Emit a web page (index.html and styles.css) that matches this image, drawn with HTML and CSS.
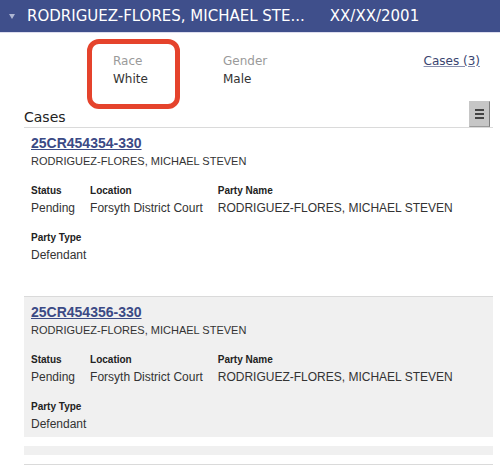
FILE: index.html
```html
<!DOCTYPE html>
<html>
<head>
<meta charset="utf-8">
<link rel="stylesheet" href="styles.css">
</head>
<body>
<div class="header">
  <span class="caret"></span>
  <span class="hname">RODRIGUEZ-FLORES, MICHAEL STE...</span>
  <span class="hdate">XX/XX/2001</span>
</div>
<div class="main">
  <div class="info">
    <div class="field race">
      <div class="flabel">Race</div>
      <div class="fvalue">White</div>
    </div>
    <div class="field">
      <div class="flabel">Gender</div>
      <div class="fvalue">Male</div>
    </div>
    <a class="caselink" href="#">Cases (3)</a>
    <div class="highlight"></div>
  </div>
  <div class="cases-head">
    <span class="cases-title">Cases</span>
    <button class="menu-btn" aria-label="menu"><span></span><span></span><span></span></button>
  </div>
  <div class="list">
    <div class="case">
      <a class="case-no" href="#">25CR454354-330</a>
      <div class="case-name">RODRIGUEZ-FLORES, MICHAEL STEVEN</div>
      <div class="cols">
        <div><div class="lbl">Status</div><div class="val">Pending</div></div>
        <div><div class="lbl">Location</div><div class="val">Forsyth District Court</div></div>
        <div><div class="lbl">Party Name</div><div class="val">RODRIGUEZ-FLORES, MICHAEL STEVEN</div></div>
      </div>
      <div class="cols second">
        <div><div class="lbl">Party Type</div><div class="val">Defendant</div></div>
      </div>
    </div>
    <div class="case alt">
      <a class="case-no" href="#">25CR454356-330</a>
      <div class="case-name">RODRIGUEZ-FLORES, MICHAEL STEVEN</div>
      <div class="cols">
        <div><div class="lbl">Status</div><div class="val">Pending</div></div>
        <div><div class="lbl">Location</div><div class="val">Forsyth District Court</div></div>
        <div><div class="lbl">Party Name</div><div class="val">RODRIGUEZ-FLORES, MICHAEL STEVEN</div></div>
      </div>
      <div class="cols second">
        <div><div class="lbl">Party Type</div><div class="val">Defendant</div></div>
      </div>
    </div>
    <div class="strip"></div>
    <div class="case-next"></div>
  </div>
</div>
</body>
</html>
```
FILE: styles.css
```css
html, body {
  margin: 0;
  padding: 0;
  background: #fff;
}
body {
  font-family: "DejaVu Sans", Verdana, sans-serif;
  color: #333;
  overflow: hidden;
}
.header {
  height: 33px;
  background: #3f4f8b;
  display: flex;
  align-items: center;
  color: #fff;
  font-size: 15px;
  padding-left: 9px;
  box-sizing: border-box;
  border-bottom: 1px solid #dde;
}
.caret {
  width: 0;
  height: 0;
  border-left: 3px solid transparent;
  border-right: 3px solid transparent;
  border-top: 5px solid #aeb6d2;
  margin-right: 12px;
  margin-top: 1px;
}
.hname {
  margin-right: 25px;
}
.main {
  padding: 0 7px 0 24px;
}
.info {
  position: relative;
  display: flex;
  align-items: flex-start;
  padding-top: 19px;
  font-size: 12px;
  line-height: 18px;
}
.field {
  width: 110px;
}
.field.race {
  margin-left: 89px;
}
.flabel {
  color: #9a9a9a;
}
.fvalue {
  color: #333;
}
.caselink {
  margin-left: auto;
  margin-right: 13px;
  color: #3a4470;
  text-decoration: underline;
  text-decoration-color: #8890b0;
}
.highlight {
  position: absolute;
  left: 63px;
  top: 6px;
  width: 83px;
  height: 60px;
  border: 5px solid #e5432c;
  border-radius: 12px;
}
.cases-head {
  display: flex;
  align-items: flex-end;
  justify-content: space-between;
  height: 26px;
  margin-top: 13px;
  margin-right: 3px;
}
.cases-title {
  font-size: 14px;
  line-height: 17px;
  padding-bottom: 1px;
  color: #222;
}
.menu-btn {
  width: 21px;
  height: 26px;
  padding: 0;
  margin: 0;
  background: #c6c6c6;
  border: 1px solid #c6c6c6;
  border-right-color: #7d7d7d;
  border-bottom-color: #9a9a9a;
  display: flex;
  flex-direction: column;
  align-items: center;
  justify-content: center;
  gap: 2px;
}
.menu-btn span {
  display: block;
  width: 9px;
  height: 2px;
  background: #444;
}
.list {
  font-family: "Liberation Sans", Arial, sans-serif;
}
.case {
  border-top: 1px solid #dadada;
  padding: 6px 7px 7px;
  height: 127px;
  margin-bottom: 28px;
}
.case.alt {
  background: #f0f0f0;
  margin-bottom: 9px;
}
.case-no {
  display: inline-block;
  font-size: 14px;
  line-height: 17px;
  font-weight: bold;
  color: #3b4a85;
  text-decoration: underline;
}
.case-name {
  font-size: 11px;
  line-height: 13px;
  margin-top: 3px;
  color: #333;
}
.cols {
  display: flex;
  gap: 15px;
  margin-top: 17px;
}
.lbl {
  font-size: 10px;
  line-height: 12px;
  font-weight: bold;
  color: #222;
}
.val {
  font-size: 12px;
  line-height: 14px;
  margin-top: 4px;
  color: #333;
}
.strip {
  height: 9px;
  background: #f0f0f0;
}
.case-next {
  margin-top: 9px;
  border-top: 1px solid #dadada;
  height: 10px;
}
```
